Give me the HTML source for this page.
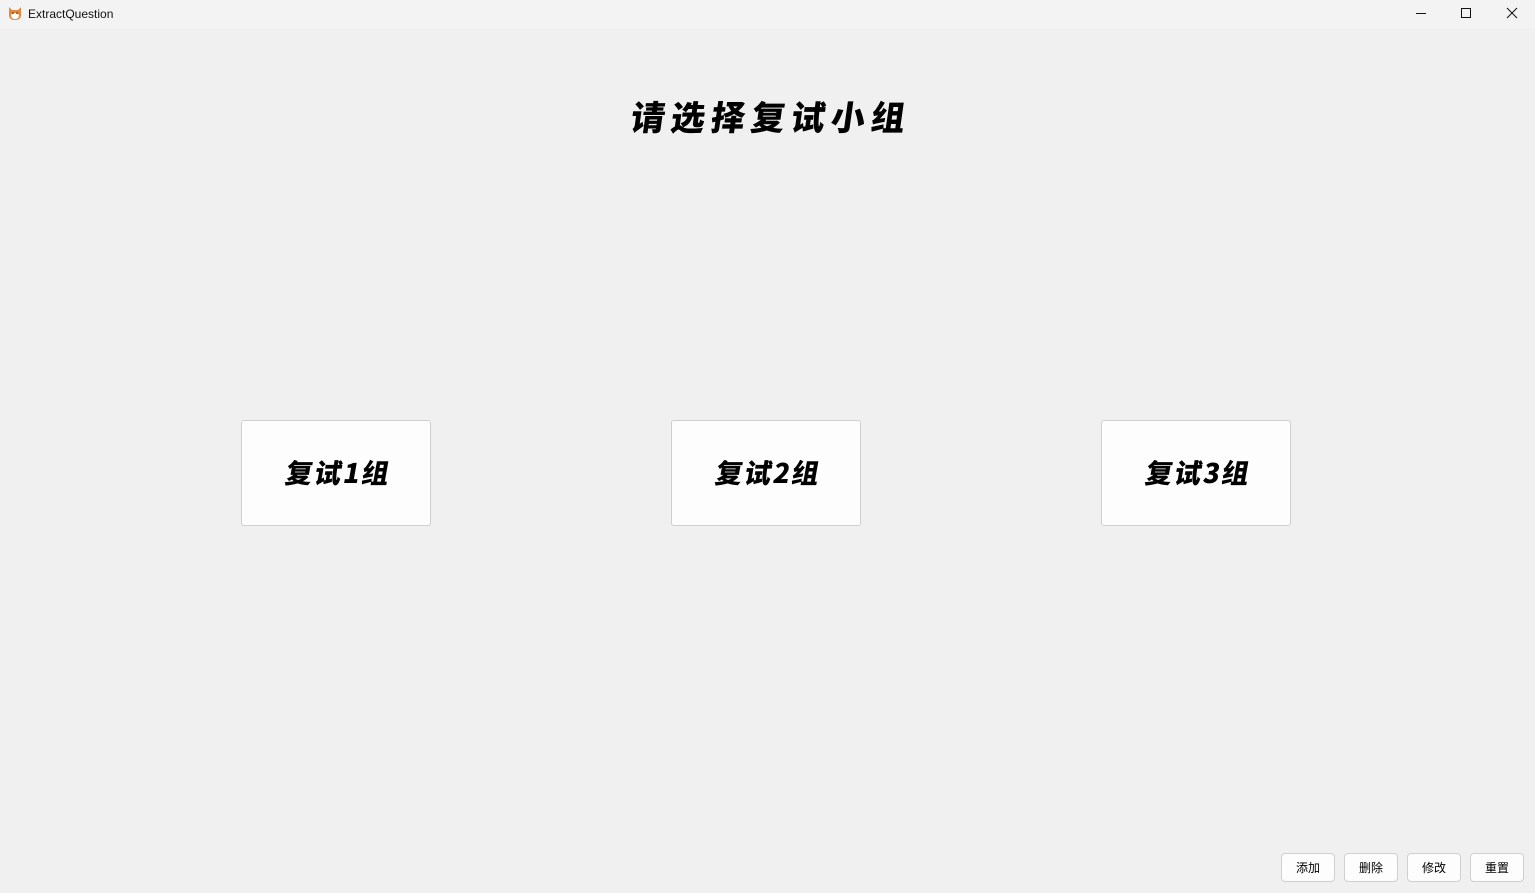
<!DOCTYPE html>
<html><head><meta charset="utf-8"><style>
html,body{margin:0;padding:0;width:1535px;height:893px;overflow:hidden;background:#f0f0f0;font-family:"Liberation Sans","Noto Sans CJK SC",sans-serif;}
.tb{position:absolute;left:0;top:0;width:1535px;height:29px;background:#f3f3f3;}
.tb .t{position:absolute;left:28px;top:7px;font-size:12px;color:#111;}
.title{position:absolute;left:4px;width:1535px;top:91px;text-align:center;font-size:34px;font-weight:900;letter-spacing:6px;font-family:"Noto Sans CJK SC",sans-serif;transform:skewX(-8deg);color:#000;}
.g{position:absolute;top:420px;width:188px;height:104px;background:#fdfdfd;border:1px solid #cfcfcf;border-radius:3px;display:flex;align-items:center;justify-content:center;font-size:27px;font-weight:900;font-family:"Noto Sans CJK SC",sans-serif;}
.g span{display:inline-block;transform:skewX(-10deg);letter-spacing:2px;margin-left:6px;margin-top:-4px}
.b{position:absolute;top:853px;width:54px;height:29px;background:#fdfdfd;border:1px solid #d0d0d0;border-radius:4px;font-size:12px;display:flex;align-items:center;justify-content:center;box-sizing:border-box;}
</style></head><body>
<div class="tb">
<svg style="position:absolute;left:7px;top:5px" width="16" height="16" viewBox="0 0 16 16"><path d="M2 2 L5 5 L11 5 L14 2 L14 10 Q14 15 8 15 Q2 15 2 10Z" fill="#e8883a"/><path d="M4 10 Q8 6 12 10 Q12 14 8 14 Q4 14 4 10Z" fill="#fff"/><circle cx="6" cy="8" r="0.8" fill="#222"/><circle cx="10" cy="8" r="0.8" fill="#222"/></svg>
<div class="t">ExtractQuestion</div>
<svg style="position:absolute;left:1415px;top:8px" width="12" height="12"><path d="M1 5.5H11" stroke="#111" stroke-width="1"/></svg>
<svg style="position:absolute;left:1460px;top:7px" width="12" height="12"><rect x="1.5" y="1.5" width="9" height="9" fill="none" stroke="#111" stroke-width="1"/></svg>
<svg style="position:absolute;left:1506px;top:7px" width="12" height="12"><path d="M1 1L11 11M11 1L1 11" stroke="#111" stroke-width="1"/></svg>
</div>
<div class="title">请选择复试小组</div>
<div class="g" style="left:241px"><span>复试1组</span></div>
<div class="g" style="left:671px"><span>复试2组</span></div>
<div class="g" style="left:1101px"><span>复试3组</span></div>
<div class="b" style="left:1281px">添加</div>
<div class="b" style="left:1344px">删除</div>
<div class="b" style="left:1407px">修改</div>
<div class="b" style="left:1470px">重置</div>
</body></html>
